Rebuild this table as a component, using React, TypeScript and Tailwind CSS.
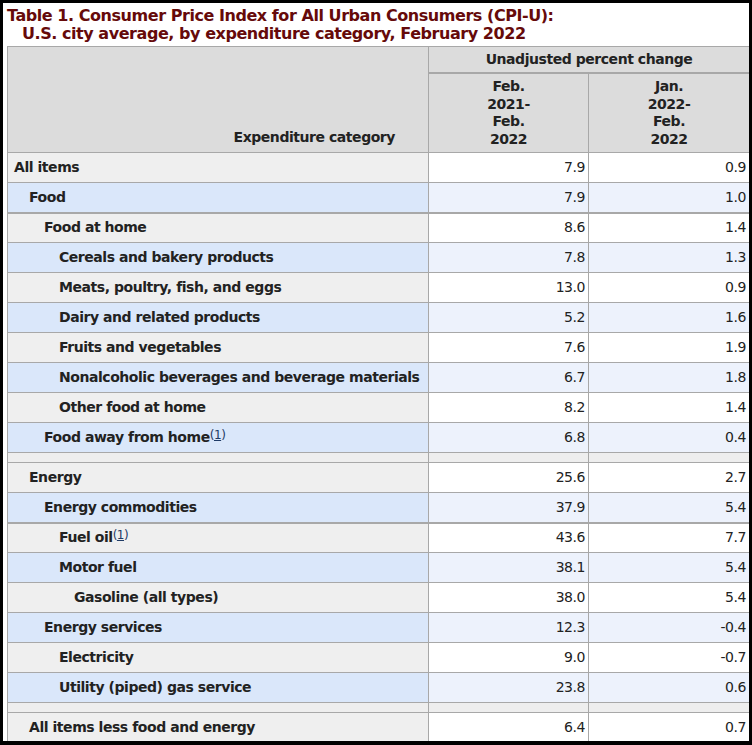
import React from "react";

type Row = {
  label: string;
  level: number;
  a?: string;
  b?: string;
  note?: boolean;
  blue?: boolean;
  spacer?: boolean;
  thick?: boolean;
};

const rows: Row[] = [
  { label: "All items", level: 0, a: "7.9", b: "0.9" },
  { label: "Food", level: 1, a: "7.9", b: "1.0", blue: true, thick: true },
  { label: "Food at home", level: 2, a: "8.6", b: "1.4" },
  { label: "Cereals and bakery products", level: 3, a: "7.8", b: "1.3", blue: true },
  { label: "Meats, poultry, fish, and eggs", level: 3, a: "13.0", b: "0.9" },
  { label: "Dairy and related products", level: 3, a: "5.2", b: "1.6", blue: true },
  { label: "Fruits and vegetables", level: 3, a: "7.6", b: "1.9" },
  { label: "Nonalcoholic beverages and beverage materials", level: 3, a: "6.7", b: "1.8", blue: true },
  { label: "Other food at home", level: 3, a: "8.2", b: "1.4" },
  { label: "Food away from home", level: 2, a: "6.8", b: "0.4", blue: true, note: true },
  { label: "", level: 0, spacer: true },
  { label: "Energy", level: 1, a: "25.6", b: "2.7" },
  { label: "Energy commodities", level: 2, a: "37.9", b: "5.4", blue: true, thick: true },
  { label: "Fuel oil", level: 3, a: "43.6", b: "7.7", note: true },
  { label: "Motor fuel", level: 3, a: "38.1", b: "5.4", blue: true },
  { label: "Gasoline (all types)", level: 4, a: "38.0", b: "5.4" },
  { label: "Energy services", level: 2, a: "12.3", b: "-0.4", blue: true },
  { label: "Electricity", level: 3, a: "9.0", b: "-0.7" },
  { label: "Utility (piped) gas service", level: 3, a: "23.8", b: "0.6", blue: true },
  { label: "", level: 0, spacer: true },
  { label: "All items less food and energy", level: 1, a: "6.4", b: "0.7" },
];

const indent = ["pl-[6px]", "pl-[21px]", "pl-[36px]", "pl-[51px]", "pl-[66px]"];

const Note = () => (
  <span className="relative -top-[3px] text-[12px] font-normal text-[#1f3b66]">
    (<span className="underline">1</span>)
  </span>
);

export default function App() {
  return (
    <div
      className="w-[752px] h-[745px] bg-black pt-[3px] px-[3px] overflow-hidden text-[#222]"
      style={{ fontFamily: '"DejaVu Sans", Verdana, sans-serif' }}
    >
      <div className="bg-white h-[738px] pl-[4px] overflow-hidden">
        <div className="pt-[4px] h-[43px] text-[16px] leading-[18px] font-bold text-[#660a0a] tracking-[-0.45px]">
          <div>Table 1. Consumer Price Index for All Urban Consumers (CPI-U):</div>
          <div className="pl-[15px]">U.S. city average, by expenditure category, February 2022</div>
        </div>
        <table className="w-[742px] table-fixed border-collapse text-[14px] tracking-[-0.45px]">
          <colgroup>
            <col className="w-[421px]" />
            <col className="w-[160px]" />
            <col className="w-[161px]" />
          </colgroup>
          <thead>
            <tr className="h-[26px]">
              <th
                rowSpan={2}
                className="bg-[#dcdcdc] border border-[#a8a8a8] align-bottom text-right pr-[33px] pb-[4px] font-bold"
              >
                Expenditure category
              </th>
              <th
                colSpan={2}
                className="bg-[#dcdcdc] border border-[#a8a8a8] border-b-2 text-center font-bold"
              >
                Unadjusted percent change
              </th>
            </tr>
            <tr className="h-[80px]">
              <th className="bg-[#dcdcdc] border border-[#a8a8a8] align-bottom text-center leading-[17.5px] pb-[4px] font-bold">
                Feb.
                <br />
                2021-
                <br />
                Feb.
                <br />
                2022
              </th>
              <th className="bg-[#dcdcdc] border border-[#a8a8a8] align-bottom text-center leading-[17.5px] pb-[4px] font-bold">
                Jan.
                <br />
                2022-
                <br />
                Feb.
                <br />
                2022
              </th>
            </tr>
          </thead>
          <tbody>
            {rows.map((r, i) =>
              r.spacer ? (
                <tr key={i} className="h-[10px] bg-[#eeeeee]">
                  <td className="border border-[#a8a8a8]" />
                  <td className="border border-[#a8a8a8]" />
                  <td className="border border-[#a8a8a8]" />
                </tr>
              ) : (
                <tr key={i} className="h-[30px]">
                  <th
                    className={`${indent[r.level]} text-left font-bold border border-[#a8a8a8] ${
                      r.thick ? "border-b-2" : ""
                    } ${r.blue ? "bg-[#dae7fa]" : "bg-[#efefef]"}`}
                  >
                    {r.label}
                    {r.note && <Note />}
                  </th>
                  <td
                    className={`text-right pr-[3px] border border-[#a8a8a8] ${
                      r.thick ? "border-b-2" : ""
                    } ${r.blue ? "bg-[#edf2fc]" : "bg-white"}`}
                  >
                    {r.a}
                  </td>
                  <td
                    className={`text-right pr-[3px] border border-[#a8a8a8] ${
                      r.thick ? "border-b-2" : ""
                    } ${r.blue ? "bg-[#edf2fc]" : "bg-white"}`}
                  >
                    {r.b}
                  </td>
                </tr>
              )
            )}
          </tbody>
        </table>
      </div>
    </div>
  );
}
